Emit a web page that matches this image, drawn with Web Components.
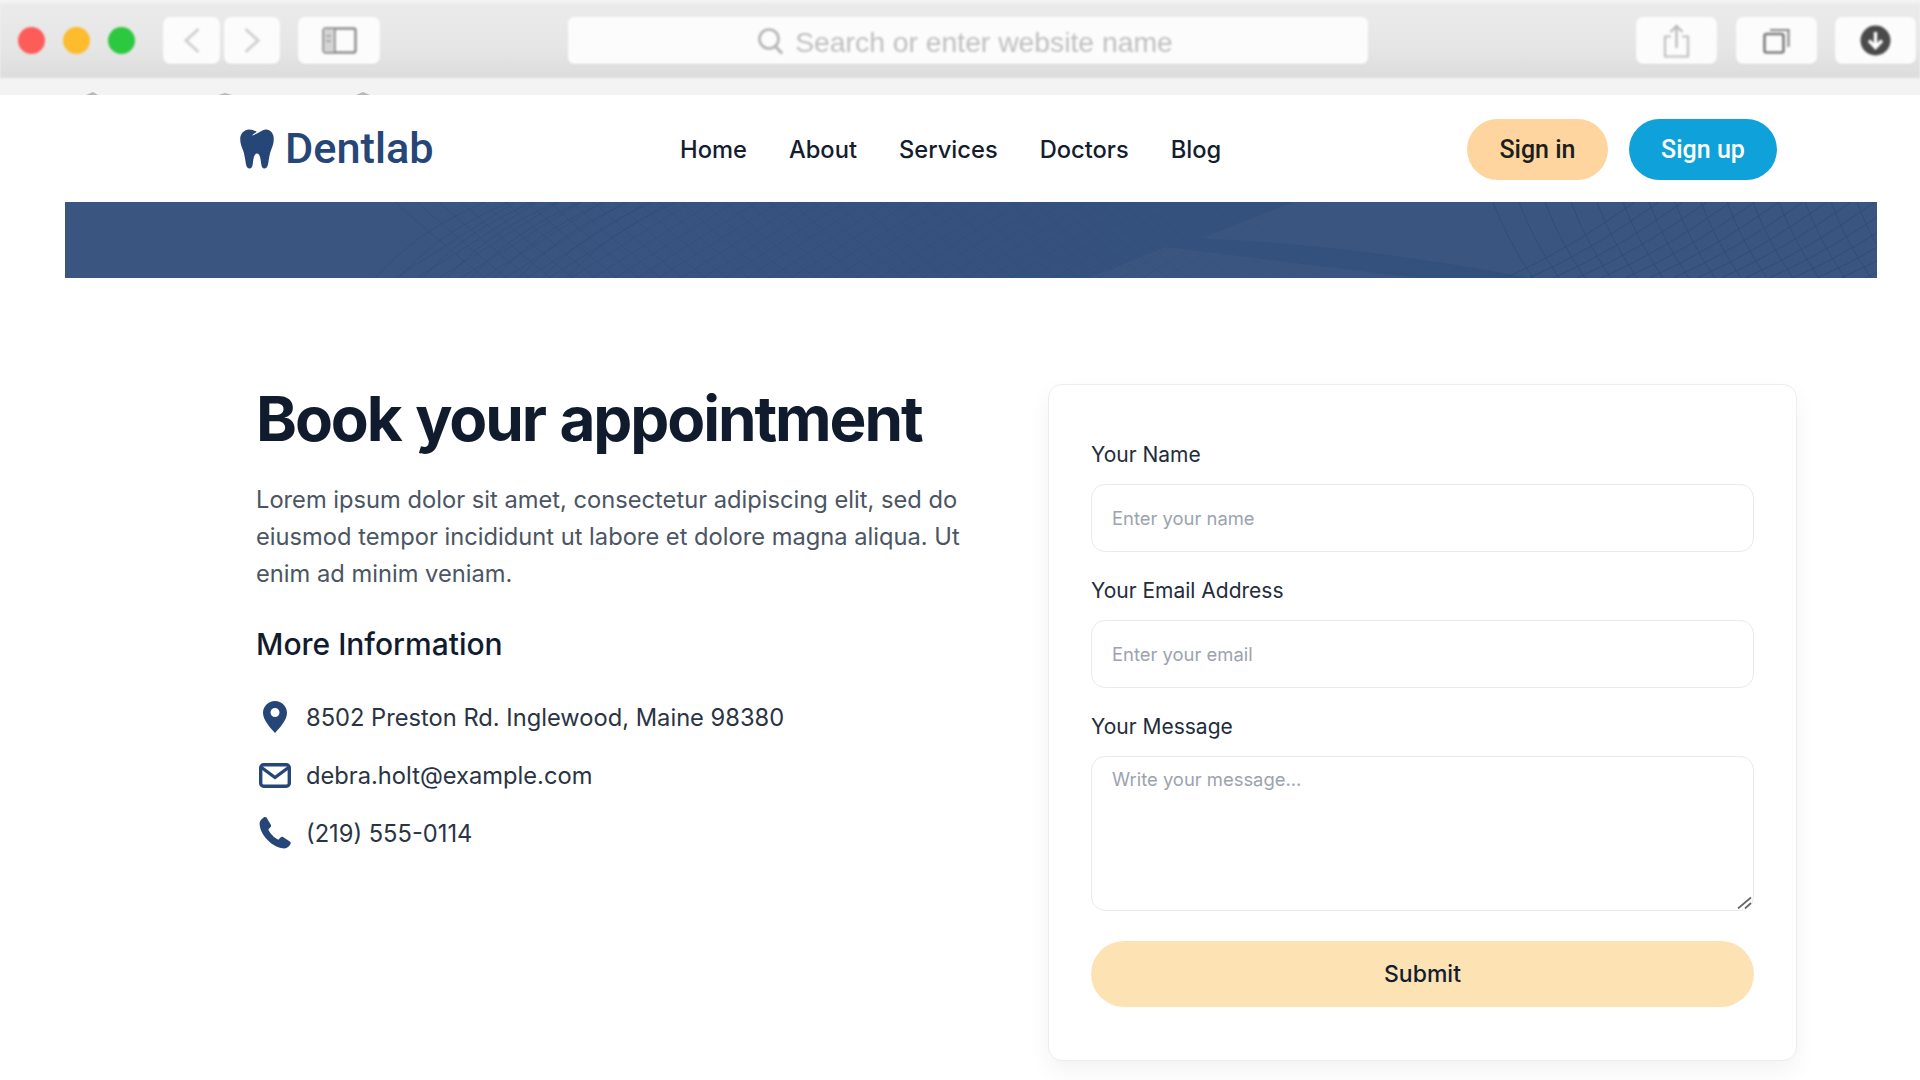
<!DOCTYPE html>
<html lang="en">
<head>
<meta charset="utf-8">
<title>Dentlab - Book your appointment</title>
<style>
  html, body { margin: 0; padding: 0; background: #fff; }
  body { font-family: Inter, "Liberation Sans", sans-serif; overflow: hidden; height: 1080px; }
</style>
</head>
<body>
<browser-bar></browser-bar>
<site-header></site-header>
<hero-banner></hero-banner>
<booking-section>
  <info-panel slot="info">
    <contact-row kind="pin">8502 Preston Rd. Inglewood, Maine 98380</contact-row>
    <contact-row kind="mail">debra.holt@example.com</contact-row>
    <contact-row kind="phone">(219) 555-0114</contact-row>
  </info-panel>
  <booking-form slot="form">
    <form-field label="Your Name" placeholder="Enter your name"></form-field>
    <form-field label="Your Email Address" placeholder="Enter your email"></form-field>
    <form-field label="Your Message" placeholder="Write your message..." multiline></form-field>
  </booking-form>
</booking-section>

<script>
class BrowserBar extends HTMLElement {
  constructor() {
    super();
    this.attachShadow({mode: "open"});
  }
  connectedCallback() {
    this.shadowRoot.innerHTML = `
    <style>
      :host { display: block; height: 95px; padding-top: 3px; box-sizing: border-box; background: #f3f3f3; overflow: hidden; }
      .bar {
        height: 75px;
        display: flex; align-items: center;
        background: linear-gradient(#ebebeb, #e6e6e6 60%, #dcdcdc);
        filter: blur(.8px);
      }
      .dot { width: 27px; height: 27px; border-radius: 50%; flex: none; margin-right: 18px; }
      .btn {
        height: 47px; background: #fcfcfc; border-radius: 7px; flex: none;
        display: flex; align-items: center; justify-content: center;
        box-shadow: 0 1px 2px rgba(0,0,0,.06);
      }
      .search {
        width: 800px; height: 47px; background: #fcfcfc; border-radius: 6px; flex: none;
        margin-left: 188px; display: flex; align-items: center; justify-content: center; gap: 11px;
        font: 28.300px "Liberation Sans", sans-serif; color: #bfbfbf;
        box-shadow: 0 1px 2px rgba(0,0,0,.06);
      }
      .search svg { margin-left: -6px; }
      .search span { padding-top: 3px; }
      svg { display: block; fill: none; }
      .marks { margin-top: 14px; }
    </style>
    <div class="bar">
      <span class="dot" style="margin-left:18px;background:#fd5c58"></span>
      <span class="dot" style="background:#fdbb2e"></span>
      <span class="dot" style="background:#2bc840;margin-right:0"></span>
      <div class="btn" style="width:57px;margin-left:28px">
        <svg width="18" height="27" viewBox="0 0 18 27"><path d="M15.5 2 3 13.5 15.5 25" stroke="#d0d0d0" stroke-width="3"/></svg>
      </div>
      <div class="btn" style="width:56px;margin-left:4px">
        <svg width="18" height="27" viewBox="0 0 18 27"><path d="M2.5 2 15 13.5 2.5 25" stroke="#d0d0d0" stroke-width="3"/></svg>
      </div>
      <div class="btn" style="width:82px;margin-left:18px">
        <svg width="35" height="27" viewBox="0 0 35 27"><rect x="1.5" y="1.5" width="32" height="24" rx="2" stroke="#8c8c8c" stroke-width="2.4"/><path d="M12.5 2v23" stroke="#8c8c8c" stroke-width="2.4"/><path d="M2 2h10v23H2z" fill="#d4d4d4"/><path d="M4 9h5M4 14h5" stroke="#999" stroke-width="1.4"/></svg>
      </div>
      <div class="search">
        <svg width="27" height="28" viewBox="0 0 27 28"><circle cx="12" cy="12" r="9.5" stroke="#b4b4b4" stroke-width="2.6"/><path d="m18.5 19.5 6.5 7" stroke="#b4b4b4" stroke-width="3"/></svg>
        <span>Search or enter website name</span>
      </div>
      <div class="btn" style="width:81px;margin-left:268px">
        <svg width="27" height="34" viewBox="0 0 27 34"><path d="M8 12.5H2v20h23v-20h-6" stroke="#c0c0c0" stroke-width="2.2"/><path d="M13.5 24V2M7.5 8l6-6 6 6" stroke="#b8b8b8" stroke-width="2.2"/></svg>
      </div>
      <div class="btn" style="width:81px;margin-left:19px">
        <svg width="28" height="27" viewBox="0 0 28 27"><rect x="1.5" y="7" width="19" height="18.5" rx="2" stroke="#7c7c7c" stroke-width="2.6"/><path d="M7 3h18.5v17" stroke="#8a8a8a" stroke-width="2.2"/></svg>
      </div>
      <div class="btn" style="width:81px;margin-left:18px">
        <svg width="31" height="31" viewBox="0 0 31 31"><circle cx="15.5" cy="15.5" r="15" fill="#4a4a4a"/><path d="M15.5 7v15M9 15.500l6.500 7 6.500-7" stroke="#fff" stroke-width="3.400"/></svg>
      </div>
    </div>
    <svg class="marks" width="1920" height="3" viewBox="0 0 1920 3">
      <path d="M86 3h12l-5-3zM218 3h14l-7-2zM356 3h14l-7-3z" fill="#b8b8b8"/>
    </svg>`;
  }
}

class SiteHeader extends HTMLElement {
  constructor() {
    super();
    this.attachShadow({mode: "open"});
  }
  connectedCallback() {
    let links = ["Home", "About", "Services", "Doctors", "Blog"]
      .map(t => `<a href="#">${t}</a>`).join("");
    this.shadowRoot.innerHTML = `
    <style>
      :host { display: flex; align-items: center; height: 107px; padding: 2px 143px 0 240px; box-sizing: border-box; font-family: Inter, sans-serif; }
      .logo { display: flex; align-items: center; gap: 11px; width: 192px; flex: none; margin-top: -2px; color: #264677; font: 500 43.300px Roboto, sans-serif; text-decoration: none; }
      svg { display: block; flex: none; }
      nav { display: flex; gap: 42px; margin-left: 248px; }
      nav a { color: #141d2f; font-size: 23.700px; font-weight: 500; text-decoration: none; }
      .actions { display: flex; gap: 21px; margin-left: auto; }
      .btn { height: 61px; border-radius: 31px; display: flex; align-items: center; justify-content: center; font: 500 25px Roboto, sans-serif; text-decoration: none; }
      .in { width: 141px; background: #fed59e; color: #1d1d20; }
      .up { width: 148px; background: #0fa1d9; color: #fff; }
    </style>
    <a class="logo" href="#">
      <svg width="34" height="40" viewBox="0 0 34 40"><path d="M9 .5c3 0 5.500 1.300 7.800 2.300C15 4 13.500 5.300 11.800 6.500c2.800-.8 5.200-2 8-3.600C22 1.500 24 .5 26 .5c4.800 0 7.800 4.300 7.800 9.500 0 5-1.700 8-3.100 12-1.100 3.300-1.600 7-2.200 10.500-.5 3.200-1 7-4 7-2.500 0-3-2.500-3.400-5.500-.5-3.500-1-9.500-4.100-9.500s-3.600 6-4.100 9.500c-.4 3-.9 5.500-3.400 5.500-3 0-3.500-3.800-4-7-.6-3.500-1.100-7.200-2.200-10.500C1.900 18 .2 15 .2 10 .2 4.800 4.200.5 9 .5z" fill="#264677"/></svg>
      <span>Dentlab</span>
    </a>
    <nav>${links}</nav>
    <div class="actions">
      <a class="btn in" href="#">Sign in</a>
      <a class="btn up" href="#">Sign up</a>
    </div>`;
  }
}

class HeroBanner extends HTMLElement {
  constructor() {
    super();
    this.attachShadow({mode: "open"});
  }
  connectedCallback() {
    // faint curved mesh that sits on the blue strip
    let right = "", mid = "", arcs = "";
    for (let i = 0; i < 18; i++) {
      let x = 1428 + i * 26;
      right += `M${x} 0Q${x + 14} 38 ${x + 40} 76`;
    }
    for (let i = 0; i < 24; i++) {
      let x = 1440 + i * 24;
      right += `M${x} 76Q${x + 60} 50 ${x + 130} 0`;
    }
    for (let i = 0; i < 40; i++) {
      let x = 330 + i * 22;
      mid += `M${x} 0Q${x + 40} 36 ${x + 90} 76`;
      mid += `M${x} 76Q${x + 50} 44 ${x + 120} 0`;
    }
    for (let i = 0; i < 9; i++) {
      let x = 310 + i * 24;
      arcs += `M${x} 76Q${x + 40} 30 ${x + 110} 0`;
    }
    this.shadowRoot.innerHTML = `
    <style>
      :host { display: block; height: 76px; margin: 0 43px 0 65px; background: #3a5580; }
      svg { display: block; }
    </style>
    <svg width="1812" height="76" viewBox="0 0 1812 76" fill="none">
      <defs>
        <linearGradient id="fade" x1="0" x2="1" y1="0" y2="0">
          <stop offset="0" stop-color="#3a5580"/>
          <stop offset=".45" stop-color="#36517e"/>
          <stop offset="1" stop-color="#33507d"/>
        </linearGradient>
        <linearGradient id="mesh" x1="0" x2="1" y1="0" y2="0">
          <stop offset="0" stop-color="#2f4a76" stop-opacity=".6"/>
          <stop offset=".7" stop-color="#2f4a76" stop-opacity=".4"/>
          <stop offset="1" stop-color="#2f4a76" stop-opacity="0"/>
        </linearGradient>
      </defs>
      <path d="M400 0H1229L1137 36Q1300 44 1465 76H1351L1101 45 1024 76H400Z" fill="url(#fade)"/>
      <path d="${arcs}" stroke="#2f4a76" stroke-opacity=".55"/>
      <path d="${mid}" stroke="url(#mesh)"/>
      <path d="${right}" stroke="#2f4a76" stroke-opacity=".75"/>
    </svg>`;
  }
}

class BookingSection extends HTMLElement {
  constructor() {
    super();
    this.attachShadow({mode: "open"});
  }
  connectedCallback() {
    this.shadowRoot.innerHTML = `
    <style>
      :host { display: grid; grid-template-columns: 792px 749px; padding: 106px 0 0 256px; }
    </style>
    <slot name="info"></slot>
    <slot name="form"></slot>`;
  }
}

class InfoPanel extends HTMLElement {
  constructor() {
    super();
    this.attachShadow({mode: "open"});
  }
  connectedCallback() {
    this.shadowRoot.innerHTML = `
    <style>
      :host { display: block; font-family: Inter, sans-serif; }
      h1 { margin: 0; padding-top: 1px; font-size: 62px; line-height: 68px; font-weight: 700; letter-spacing: -2.100px; word-spacing: 2px; color: #111b2e; white-space: nowrap; }
      p { margin: 28px 0 0; width: 720px; font-size: 23.700px; line-height: 37px; color: #4b5563; }
      h2 { margin: 32px 0 0; font-size: 30px; line-height: 40px; font-weight: 500; color: #111b2e; }
      .rows { display: flex; flex-direction: column; margin-top: 24px; }
    </style>
    <h1>Book your appointment</h1>
    <p>Lorem ipsum dolor sit amet, consectetur adipiscing elit, sed do eiusmod tempor incididunt ut labore et dolore magna aliqua. Ut enim ad minim veniam.</p>
    <h2>More Information</h2>
    <div class="rows"><slot></slot></div>`;
  }
}

const ICONS = {
  pin: `<svg width="24" height="32" viewBox="0 0 24 32"><path fill-rule="evenodd" d="M12 0C5.400 0 0 5.300 0 11.900 0 19.500 8.500 27.800 12 32c3.500-4.200 12-12.500 12-20.100C24 5.300 18.600 0 12 0zm0 16a4.500 4.500 0 1 1 0-9 4.500 4.500 0 0 1 0 9z" fill="#264677"/></svg>`,
  mail: `<svg width="32" height="25" viewBox="0 0 32 25" fill="none"><rect x="1.700" y="1.700" width="28.600" height="21.600" rx="3" stroke="#264677" stroke-width="3.400"/><path d="M2.500 4.500 16 14.500l13.500-10" stroke="#264677" stroke-width="3.400"/></svg>`,
  phone: `<svg width="32" height="32" viewBox="0 0 32 32"><path d="M7.500.6 11.800 7.800c.5.900.3 1.800-.4 2.500L9.300 12.500c1.800 4 5.700 8.200 10 10.200l2.200-2.300c.7-.7 1.700-.8 2.500-.3l6.800 4.300c1 .6 1.200 1.800.7 2.700-1.300 2.400-3.300 4.300-6 4.300C13.600 31.400 .6 17.700.6 6.600.6 3.800 2.800 1.700 5 .3 5.900-.2 7 0 7.500.6z" fill="#264677"/></svg>`
};

class ContactRow extends HTMLElement {
  constructor() {
    super();
    this.attachShadow({mode: "open"});
  }
  connectedCallback() {
    this.shadowRoot.innerHTML = `
    <style>
      :host { display: flex; align-items: center; height: 58px; font-size: 23.700px; color: #2a3444; }
      .ico { width: 38px; margin-right: 12px; display: flex; justify-content: center; flex: none; }
      svg { display: block; }
    </style>
    <span class="ico">${ICONS[this.getAttribute("kind")]}</span>
    <span><slot></slot></span>`;
  }
}

class BookingForm extends HTMLElement {
  constructor() {
    super();
    this.attachShadow({mode: "open"});
  }
  connectedCallback() {
    this.shadowRoot.innerHTML = `
    <style>
      :host {
        display: block; width: 749px; height: 677px; box-sizing: border-box;
        padding: 51px 42px 0; background: #fff; border: 1px solid #ebedf0; border-radius: 14px;
        box-shadow: 0 10px 24px rgba(16,24,40,.05); font-family: Inter, sans-serif;
      }
      .fields { display: flex; flex-direction: column; gap: 20px; }
      button {
        display: block; width: 100%; height: 66px; margin-top: 30px; border: 0; border-radius: 33px;
        background: #fde3b4; color: #141d2f; font: 500 23px Inter, sans-serif;
      }
    </style>
    <div class="fields"><slot></slot></div>
    <button type="button">Submit</button>`;
  }
}

class FormField extends HTMLElement {
  constructor() {
    super();
    this.attachShadow({mode: "open"});
  }
  connectedCallback() {
    let label = this.getAttribute("label");
    let ph = this.getAttribute("placeholder");
    let box = this.hasAttribute("multiline")
      ? `<textarea placeholder="${ph}"></textarea>
         <svg class="grip" width="15" height="13" viewBox="0 0 15 13"><path d="M1 12.500 14 1.500M8 12.500l6-5.500" stroke="#666" stroke-width="1.700" fill="none"/></svg>`
      : `<input type="text" placeholder="${ph}">`;
    this.shadowRoot.innerHTML = `
    <style>
      :host { display: block; font-family: Inter, sans-serif; }
      label { display: block; font-size: 21px; line-height: 38px; margin-bottom: 10px; color: #222c3c; }
      .box { position: relative; }
      input, textarea {
        display: block; width: 100%; box-sizing: border-box; margin: 0; padding: 0 20px;
        border: 1px solid #e8eaed; border-radius: 14px; background: #fff; outline: 0;
        font: 18.400px Inter, sans-serif; color: #222c3c;
      }
      input { height: 68px; }
      textarea { height: 155px; padding-top: 8px; line-height: 28px; resize: none; }
      ::placeholder { color: #9ca3af; opacity: 1; }
      .grip { position: absolute; right: 2px; bottom: 2px; display: block; }
    </style>
    <label>${label}</label>
    <div class="box">${box}</div>`;
  }
}

customElements.define("browser-bar", BrowserBar);
customElements.define("site-header", SiteHeader);
customElements.define("hero-banner", HeroBanner);
customElements.define("booking-section", BookingSection);
customElements.define("info-panel", InfoPanel);
customElements.define("contact-row", ContactRow);
customElements.define("booking-form", BookingForm);
customElements.define("form-field", FormField);
</script>
</body>
</html>
